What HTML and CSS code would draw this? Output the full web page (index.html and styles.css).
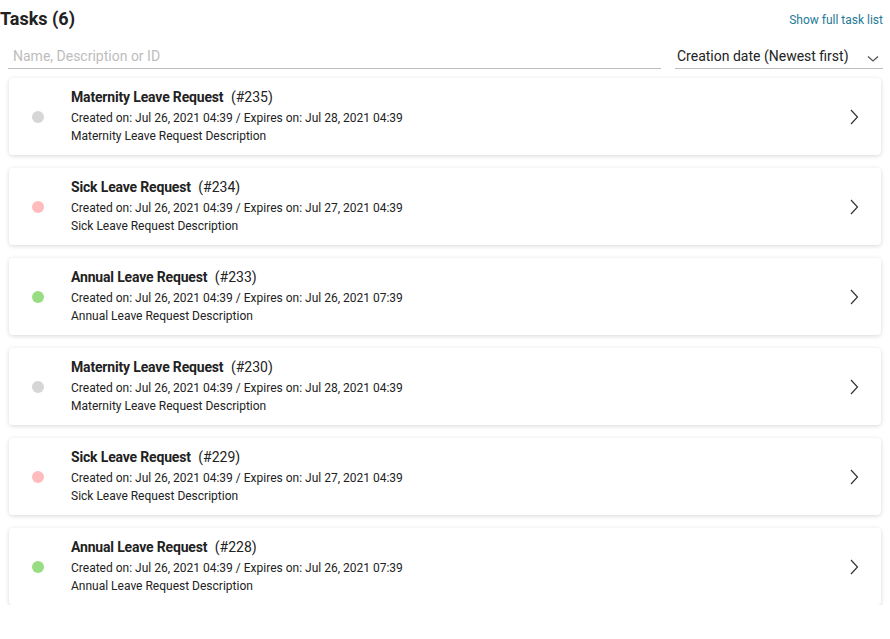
FILE: index.html
```html
<!DOCTYPE html>
<html>
<head>
<meta charset="utf-8">
<link rel="stylesheet" href="styles.css">
</head>
<body>
<div class="page">
  <div class="header">
    <h1 class="title">Tasks (6)</h1>
    <a class="link" href="#">Show full task list</a>
  </div>
  <div class="filters">
    <div class="search"><span class="placeholder">Name, Description or ID</span></div>
    <div class="select">
      <span>Creation date (Newest first)</span>
      <svg class="caret" width="12" height="8" viewBox="0 0 12 8"><path d="M1 1.5 L6 6 L11 1.5" fill="none" stroke="#555" stroke-width="1.3"/></svg>
    </div>
  </div>
  <div class="list">
    <div class="card">
      <span class="dot grey"></span>
      <div class="info">
        <div class="name"><b>Maternity Leave Request</b> (#235)</div>
        <div class="line">Created on: Jul 26, 2021 04:39 / Expires on: Jul 28, 2021 04:39</div>
        <div class="line">Maternity Leave Request Description</div>
      </div>
      <svg class="chev" width="10" height="16" viewBox="0 0 10 16"><path d="M2 1 L8.5 8 L2 15" fill="none" stroke="#333" stroke-width="1.2"/></svg>
    </div>
    <div class="card">
      <span class="dot red"></span>
      <div class="info">
        <div class="name"><b>Sick Leave Request</b> (#234)</div>
        <div class="line">Created on: Jul 26, 2021 04:39 / Expires on: Jul 27, 2021 04:39</div>
        <div class="line">Sick Leave Request Description</div>
      </div>
      <svg class="chev" width="10" height="16" viewBox="0 0 10 16"><path d="M2 1 L8.5 8 L2 15" fill="none" stroke="#333" stroke-width="1.2"/></svg>
    </div>
    <div class="card">
      <span class="dot green"></span>
      <div class="info">
        <div class="name"><b>Annual Leave Request</b> (#233)</div>
        <div class="line">Created on: Jul 26, 2021 04:39 / Expires on: Jul 26, 2021 07:39</div>
        <div class="line">Annual Leave Request Description</div>
      </div>
      <svg class="chev" width="10" height="16" viewBox="0 0 10 16"><path d="M2 1 L8.5 8 L2 15" fill="none" stroke="#333" stroke-width="1.2"/></svg>
    </div>
    <div class="card">
      <span class="dot grey"></span>
      <div class="info">
        <div class="name"><b>Maternity Leave Request</b> (#230)</div>
        <div class="line">Created on: Jul 26, 2021 04:39 / Expires on: Jul 28, 2021 04:39</div>
        <div class="line">Maternity Leave Request Description</div>
      </div>
      <svg class="chev" width="10" height="16" viewBox="0 0 10 16"><path d="M2 1 L8.5 8 L2 15" fill="none" stroke="#333" stroke-width="1.2"/></svg>
    </div>
    <div class="card">
      <span class="dot red"></span>
      <div class="info">
        <div class="name"><b>Sick Leave Request</b> (#229)</div>
        <div class="line">Created on: Jul 26, 2021 04:39 / Expires on: Jul 27, 2021 04:39</div>
        <div class="line">Sick Leave Request Description</div>
      </div>
      <svg class="chev" width="10" height="16" viewBox="0 0 10 16"><path d="M2 1 L8.5 8 L2 15" fill="none" stroke="#333" stroke-width="1.2"/></svg>
    </div>
    <div class="card">
      <span class="dot green"></span>
      <div class="info">
        <div class="name"><b>Annual Leave Request</b> (#228)</div>
        <div class="line">Created on: Jul 26, 2021 04:39 / Expires on: Jul 26, 2021 07:39</div>
        <div class="line">Annual Leave Request Description</div>
      </div>
      <svg class="chev" width="10" height="16" viewBox="0 0 10 16"><path d="M2 1 L8.5 8 L2 15" fill="none" stroke="#333" stroke-width="1.2"/></svg>
    </div>
  </div>
</div>
</body>
</html>
```
FILE: styles.css
```css
html, body {
  margin: 0;
  padding: 0;
  background: #fff;
}
body {
  font-family: Roboto, "Liberation Sans", sans-serif;
  color: #222;
}
.page {
  width: 890px;
}
.header {
  display: flex;
  justify-content: space-between;
  align-items: flex-start;
  height: 44px;
}
.title {
  margin: 6px 0 0 0;
  font-size: 18px;
  font-weight: 700;
  line-height: 26px;
  color: #222;
}
.link {
  margin: 12px 7px 0 0;
  font-size: 12px;
  line-height: 16px;
  color: #1f7a96;
  text-decoration: none;
}
.filters {
  display: flex;
  gap: 14px;
  padding: 0 7px 0 8px;
  height: 25px;
}
.search {
  flex: 1;
  border-bottom: 1px solid #bdbdbd;
  display: flex;
  align-items: center;
  padding-left: 5px;
}
.placeholder {
  font-size: 14px;
  color: #bdbdbd;
}
.select {
  width: 208px;
  border-bottom: 1px solid #bdbdbd;
  display: flex;
  align-items: center;
  justify-content: space-between;
  padding-left: 2px;
  font-size: 14px;
  color: #222;
  box-sizing: border-box;
}
.caret {
  margin: 6px 4px 0 0;
}
.list {
  display: flex;
  flex-direction: column;
  gap: 13px;
  padding: 9px 9px 0 9px;
}
.card {
  height: 77px;
  box-sizing: border-box;
  background: #fff;
  border-radius: 4px;
  box-shadow: 0 1px 4px rgba(0, 0, 0, 0.16);
  display: flex;
  align-items: center;
  padding: 0 22px 0 23px;
}
.dot {
  width: 12px;
  height: 12px;
  border-radius: 50%;
  flex: none;
  margin-right: 27px;
}
.grey { background: #d6d6d6; }
.red { background: #ffbcbc; }
.green { background: #98dd84; }
.info {
  flex: 1;
  margin-top: -3px;
}
.name {
  font-size: 14px;
  line-height: 24px;
  color: #222;
}
.name b {
  font-weight: 700;
  letter-spacing: -0.17px;
  margin-right: 4px;
}
.line {
  font-size: 12px;
  line-height: 18px;
  color: #222;
}
.chev {
  flex: none;
}
```
